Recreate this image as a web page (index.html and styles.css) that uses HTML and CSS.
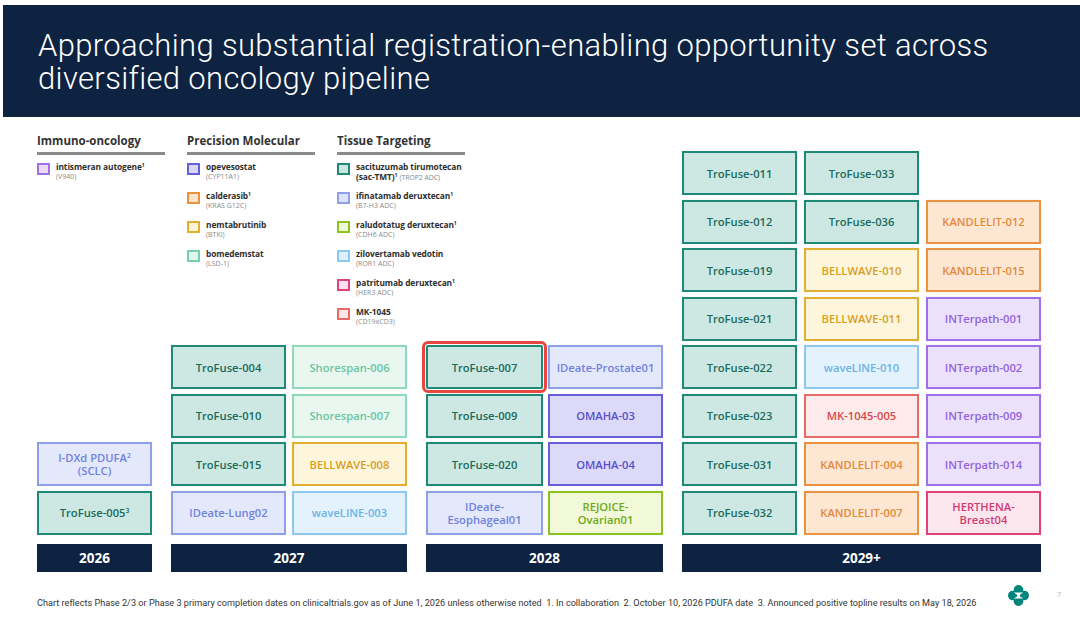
FILE: index.html
```html
<!DOCTYPE html>
<html lang="en">
<head>
<meta charset="utf-8">
<title>Oncology pipeline</title>
<link rel="stylesheet" href="styles.css">
</head>
<body>
<header class="banner">
  <h1 class="title">Approaching substantial registration-enabling opportunity set across diversified oncology pipeline</h1>
</header>

<main class="chart">
  <section class="legend">
    <div class="lg-col">
      <h2 class="lg-head">Immuno-oncology</h2>
      <ul class="lg-list">
        <li class="lg-item"><span class="sw purple"></span><span class="lg-text"><b>intismeran autogene<sup>1</sup></b><i>(V940)</i></span></li>
      </ul>
    </div>
    <div class="lg-col">
      <h2 class="lg-head">Precision Molecular</h2>
      <ul class="lg-list">
        <li class="lg-item"><span class="sw violet"></span><span class="lg-text"><b>opevesostat</b><i>(CYP11A1)</i></span></li>
        <li class="lg-item"><span class="sw orange"></span><span class="lg-text"><b>calderasib<sup>1</sup></b><i>(KRAS G12C)</i></span></li>
        <li class="lg-item"><span class="sw gold"></span><span class="lg-text"><b>nemtabrutinib</b><i>(BTKi)</i></span></li>
        <li class="lg-item"><span class="sw mint"></span><span class="lg-text"><b>bomedemstat</b><i>(LSD-1)</i></span></li>
      </ul>
    </div>
    <div class="lg-col">
      <h2 class="lg-head">Tissue Targeting</h2>
      <ul class="lg-list">
        <li class="lg-item"><span class="sw teal"></span><span class="lg-text"><b>sacituzumab tirumotecan</b><b>(sac-TMT)<sup>1</sup> <i class="inl">(TROP2 ADC)</i></b></span></li>
        <li class="lg-item"><span class="sw peri"></span><span class="lg-text"><b>ifinatamab deruxtecan<sup>1</sup></b><i>(B7-H3 ADC)</i></span></li>
        <li class="lg-item"><span class="sw lime"></span><span class="lg-text"><b>raludotatug deruxtecan<sup>1</sup></b><i>(CDH6 ADC)</i></span></li>
        <li class="lg-item"><span class="sw sky"></span><span class="lg-text"><b>zilovertamab vedotin</b><i>(ROR1 ADC)</i></span></li>
        <li class="lg-item"><span class="sw pink"></span><span class="lg-text"><b>patritumab deruxtecan<sup>1</sup></b><i>(HER3 ADC)</i></span></li>
        <li class="lg-item"><span class="sw red"></span><span class="lg-text"><b>MK-1045</b><i>(CD19xCD3)</i></span></li>
      </ul>
    </div>
  </section>

  <div class="grp g2026 c1">
    <div class="box peri"><span>I-DXd PDUFA<sup>2</sup><br>(SCLC)</span></div>
    <div class="box teal"><span>TroFuse-005<sup>3</sup></span></div>
  </div>

  <div class="grp g2027 c2">
    <div class="box teal"><span>TroFuse-004</span></div>
    <div class="box mint"><span>Shorespan-006</span></div>
    <div class="box teal"><span>TroFuse-010</span></div>
    <div class="box mint"><span>Shorespan-007</span></div>
    <div class="box teal"><span>TroFuse-015</span></div>
    <div class="box gold"><span>BELLWAVE-008</span></div>
    <div class="box peri"><span>IDeate-Lung02</span></div>
    <div class="box sky"><span>waveLINE-003</span></div>
  </div>

  <div class="grp g2028 c2">
    <div class="box teal hl"><span>TroFuse-007</span></div>
    <div class="box peri"><span>IDeate-Prostate01</span></div>
    <div class="box teal"><span>TroFuse-009</span></div>
    <div class="box violet"><span>OMAHA-03</span></div>
    <div class="box teal"><span>TroFuse-020</span></div>
    <div class="box violet"><span>OMAHA-04</span></div>
    <div class="box peri"><span>IDeate-<br>Esophageal01</span></div>
    <div class="box lime"><span>REJOICE-<br>Ovarian01</span></div>
  </div>

  <div class="grp g2029 c3">
    <div class="box teal"><span>TroFuse-011</span></div>
    <div class="box teal"><span>TroFuse-033</span></div>
    <div class="slot"></div>
    <div class="box teal"><span>TroFuse-012</span></div>
    <div class="box teal"><span>TroFuse-036</span></div>
    <div class="box orange"><span>KANDLELIT-012</span></div>
    <div class="box teal"><span>TroFuse-019</span></div>
    <div class="box gold"><span>BELLWAVE-010</span></div>
    <div class="box orange"><span>KANDLELIT-015</span></div>
    <div class="box teal"><span>TroFuse-021</span></div>
    <div class="box gold"><span>BELLWAVE-011</span></div>
    <div class="box purple"><span>INTerpath-001</span></div>
    <div class="box teal"><span>TroFuse-022</span></div>
    <div class="box sky"><span>waveLINE-010</span></div>
    <div class="box purple"><span>INTerpath-002</span></div>
    <div class="box teal"><span>TroFuse-023</span></div>
    <div class="box red"><span>MK-1045-005</span></div>
    <div class="box purple"><span>INTerpath-009</span></div>
    <div class="box teal"><span>TroFuse-031</span></div>
    <div class="box orange"><span>KANDLELIT-004</span></div>
    <div class="box purple"><span>INTerpath-014</span></div>
    <div class="box teal"><span>TroFuse-032</span></div>
    <div class="box orange"><span>KANDLELIT-007</span></div>
    <div class="box pink"><span>HERTHENA-<br>Breast04</span></div>
  </div>

  <div class="year y2026">2026</div>
  <div class="year y2027">2027</div>
  <div class="year y2028">2028</div>
  <div class="year y2029">2029+</div>
</main>

<footer class="foot">
  <p class="note">Chart reflects Phase 2/3 or Phase 3 primary completion dates on clinicaltrials.gov as of June 1, 2026 unless otherwise noted&nbsp; 1. In collaboration&nbsp; 2. October 10, 2026 PDUFA date&nbsp; 3. Announced positive topline results on May 18, 2026</p>
  <svg class="logo" viewBox="0 0 24 24" width="21" height="23" aria-label="logo">
    <g fill="#00857c">
      <circle cx="12" cy="5.5" r="5.5"/>
      <circle cx="12" cy="18.5" r="5.5"/>
      <circle cx="5.5" cy="12" r="5.5"/>
      <circle cx="18.5" cy="12" r="5.5"/>
    </g>
    <path fill="#fff" d="M6.5 8.6 H17.5 L13.6 11 V13 L17.5 15.4 H6.5 L10.4 13 V11 Z"/>
  </svg>
  <span class="pnum">7</span>
</footer>
</body>
</html>
```

FILE: styles.css
```css
* { box-sizing: border-box; }
html, body { margin: 0; padding: 0; background: #fff; }
body {
  width: 1080px;
  height: 629px;
  overflow: hidden;
  font-family: "Open Sans", "Noto Sans", sans-serif;
  color: #2b2b2b;
}

.banner {
  margin: 5px 0 0 3px;
  height: 112px;
  background: #0d2341;
  padding: 24px 0 0 35px;
}
.title {
  margin: 0;
  font-family: Roboto, "Open Sans", sans-serif;
  font-weight: 300;
  font-size: 31px;
  line-height: 33px;
  color: #fff;
  letter-spacing: 0.35px;
  max-width: 1000px;
}

.chart {
  display: grid;
  grid-template-columns: 115px 236px 237px 359px;
  grid-template-rows: 211px auto auto;
  column-gap: 19px;
  padding: 17px 0 0 37px;
}

.legend {
  grid-column: 1 / 4;
  grid-row: 1;
  display: grid;
  grid-template-columns: 128px 128px 128px;
  column-gap: 22px;
  align-content: start;
}
.lg-head {
  margin: 0;
  font-size: 11.5px;
  font-weight: 700;
  line-height: 14px;
  color: #333;
  padding-bottom: 4px;
  border-bottom: 3px solid #8a8a8a;
  white-space: nowrap;
}
.lg-list {
  list-style: none;
  margin: 7px 0 0;
  padding: 0;
  display: flex;
  flex-direction: column;
  gap: 10px;
}
.lg-item {
  display: flex;
  align-items: flex-start;
  gap: 6px;
  height: 19px;
}
.sw {
  flex: none;
  width: 13px;
  height: 12px;
  margin-top: 1px;
  border: 2px solid;
}
.lg-text {
  display: flex;
  flex-direction: column;
  white-space: nowrap;
}
.lg-text b {
  font-weight: 700;
  font-size: 8.4px;
  line-height: 9.5px;
  color: #2e2e2e;
  letter-spacing: -0.1px;
}
.lg-text i {
  font-style: normal;
  font-size: 7px;
  line-height: 9px;
  color: #8a8a8a;
}
.lg-text i.inl { font-weight: 400; }
sup { font-size: 0.6em; line-height: 0; vertical-align: 0.55em; }

.grp {
  display: grid;
  row-gap: 4.5px;
  align-self: end;
}
.c1 { grid-template-columns: 115px; }
.c2 { grid-template-columns: 115px 115px; column-gap: 6px; }
.c3 { grid-template-columns: 115px 115px 115px; column-gap: 7px; }
.g2026 { grid-column: 1; grid-row: 2; }
.g2027 { grid-column: 2; grid-row: 2; }
.g2028 { grid-column: 3; grid-row: 2; grid-template-columns: 117px 115px; column-gap: 5px; }
.g2029 { grid-column: 4; grid-row: 1 / 3; }

.box {
  height: 44px;
  border: 2px solid;
  display: flex;
  align-items: center;
  justify-content: center;
  text-align: center;
  font-size: 11.2px;
  font-weight: 600;
  line-height: 13px;
  box-shadow: 0 0 1px rgba(0,0,0,0.12);
}
.slot { height: 44px; }
.box.hl {
  outline: 3px solid #e8473f;
  outline-offset: 1px;
  border-radius: 2px;
}

.teal   { border-color: #1f8877; background: #cde8e2; color: #186b5d; }
.mint   { border-color: #8fd8bb; background: #e8f7f0; color: #6cc4a2; }
.gold   { border-color: #e2b031; background: #fdf5dc; color: #d6a01e; }
.peri   { border-color: #909fe9; background: #e4e8fb; color: #7082e0; }
.sky    { border-color: #8dc8f1; background: #e3f2fc; color: #6db2e8; }
.violet { border-color: #675ed8; background: #dcdaf8; color: #5a4ed0; }
.lime   { border-color: #8cc220; background: #f2f9d9; color: #6ea818; }
.orange { border-color: #ea9240; background: #fde7d3; color: #e5893a; }
.purple { border-color: #a070ea; background: #ece1fb; color: #9262e0; }
.red    { border-color: #e86a6a; background: #fdebeb; color: #d84848; }
.pink   { border-color: #e0417b; background: #fce6ee; color: #d23a72; }

.sw.purple { background: #e9dcfb; }
.sw.violet { background: #d9d7f7; }
.sw.orange { background: #fde3cc; }
.sw.gold   { background: #fdf3d6; }
.sw.mint   { background: #dff5ec; border-color: #74d1ab; }
.sw.teal   { background: #c9e7e0; }
.sw.peri   { background: #dde3fa; }
.sw.lime   { background: #eff8d8; }
.sw.sky    { background: #dff0fc; }
.sw.pink   { background: #fbe2ec; }
.sw.red    { background: #fde6e6; }

.year {
  grid-row: 3;
  margin-top: 9px;
  height: 28px;
  background: #0d2341;
  color: #fff;
  font-size: 13.5px;
  font-weight: 700;
  display: flex;
  align-items: center;
  justify-content: center;
}
.y2026 { grid-column: 1; }
.y2027 { grid-column: 2; }
.y2028 { grid-column: 3; }
.y2029 { grid-column: 4; }

.foot {
  display: flex;
  align-items: flex-start;
  padding: 12px 0 0 37px;
}
.note {
  margin: 14px 0 0;
  font-family: Roboto, "Open Sans", sans-serif;
  font-size: 9.1px;
  line-height: 11px;
  color: #333;
  white-space: nowrap;
  flex: none;
  width: 970px;
  letter-spacing: 0.02px;
}
.logo { flex: none; margin-left: 1px; }
.pnum {
  margin: 6px 0 0 28px;
  font-size: 7px;
  color: #b0b0b0;
}
```
